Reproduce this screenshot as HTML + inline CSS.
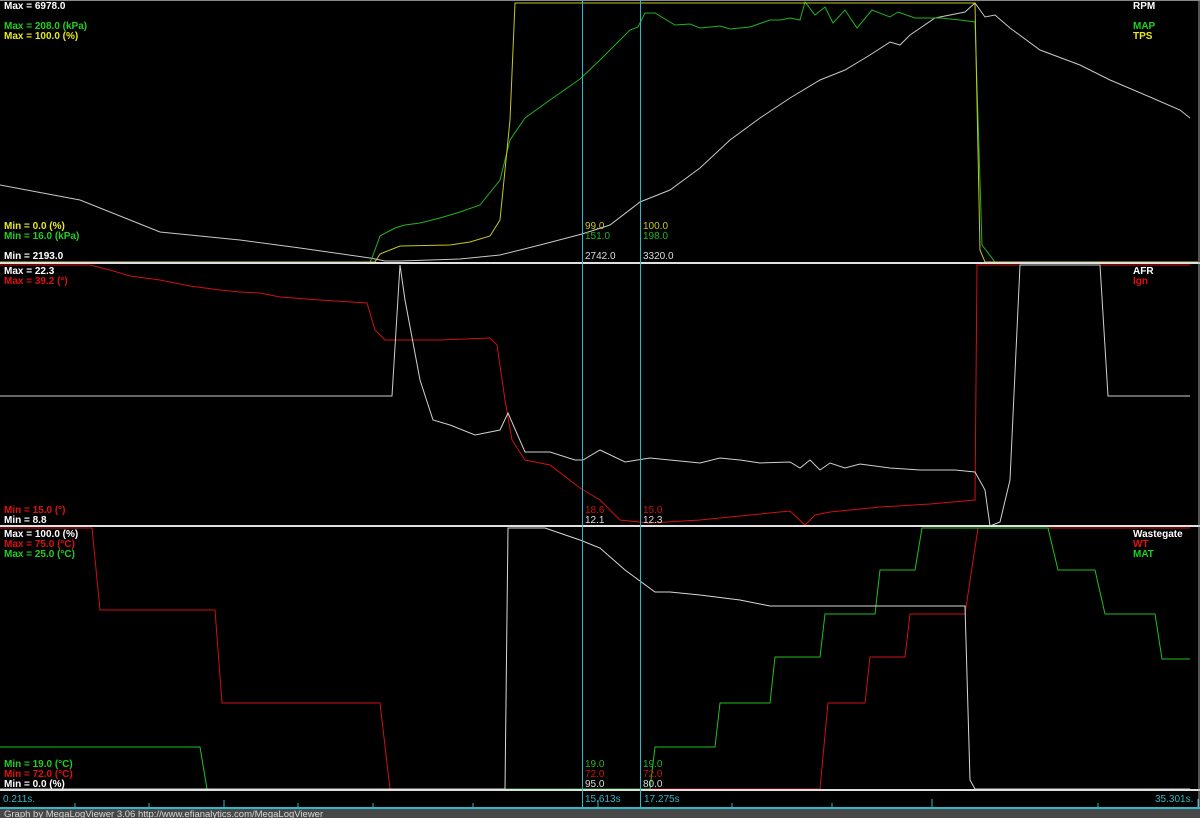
<!DOCTYPE html>
<html><head><meta charset="utf-8"><style>
html,body{margin:0;padding:0;background:#000;width:1200px;height:818px;overflow:hidden}
svg{display:block}
text{font-family:"Liberation Sans",sans-serif;font-size:10px}
.b{font-weight:bold}
</style></head><body>
<svg width="1200" height="818" viewBox="0 0 1200 818">
<rect width="1200" height="818" fill="#000"/>
<g fill="none" stroke-width="1">
<!-- panel 1 -->
<polyline stroke="#c8c8c8" points="0,185 80,200 130,220 160,232 240,240 300,248 370,258 385,261 400,261 460,259 500,255 540,245 582,234 610,225 640,202 670,190 700,168 730,140 760,118 790,98 820,80 845,70 870,55 890,42 900,45 910,35 935,18 965,12 975,3 985,17 995,15 1010,28 1040,50 1080,65 1110,80 1150,97 1180,110 1190,118"/>
<polyline stroke="#1fb51f" points="0,262 370,262 372,258 380,236 395,228 405,225 420,223 440,218 460,212 480,205 500,180 510,140 525,118 550,100 560,93 580,79 600,60 620,40 630,30 638,27 645,13 655,13 675,25 690,24 700,28 720,26 730,29 750,27 770,20 780,20 790,18 800,20 805,2 815,15 825,7 833,23 845,10 857,28 872,10 890,17 898,12 915,18 940,18 960,20 975,22 982,245 995,262"/>
<polyline stroke="#c8c820" points="0,262 375,262 380,254 400,246 450,245 470,242 490,236 500,220 510,120 515,3 975,3 980,250 985,262 1198,262"/>
<!-- panel 2 -->
<polyline stroke="#d01010" points="0,265 90,265 110,270 130,276 160,280 190,286 220,290 240,292 260,293 280,297 320,300 367,303 375,330 385,340 400,340 440,340 490,338 497,345 505,400 512,440 525,460 550,465 580,488 600,500 620,520 650,523 700,520 750,515 790,511 805,525 815,515 830,512 880,507 930,504 975,500 977,265 1190,265"/>
<polyline stroke="#d0d0d0" points="0,396 392,396 400,265 405,300 420,380 433,420 450,425 475,435 500,430 508,413 525,452 550,452 575,460 583,460 600,450 625,462 650,458 670,460 700,463 720,458 740,460 760,463 790,462 800,468 810,460 820,470 830,463 845,468 860,464 890,468 920,470 955,470 975,472 985,490 990,526 1000,522 1010,480 1020,265 1100,265 1108,396 1190,396"/>
<!-- panel 3 -->
<polyline stroke="#d01010" points="0,528 92,528 100,610 215,610 222,703 380,703 390,789 820,789 828,703 865,703 870,657 905,657 910,614 965,614 978,528 1190,528"/>
<polyline stroke="#1fc01f" points="0,747 200,747 207,789 650,789 655,747 715,747 720,703 770,703 775,657 820,657 825,614 875,614 880,570 915,570 922,528 1048,528 1058,570 1095,570 1105,614 1155,614 1162,659 1190,659"/>
<polyline stroke="#d8d8d8" points="0,789 505,789 508,528 545,528 580,540 600,548 625,570 655,592 670,592 700,595 740,600 770,606 965,606 970,780 975,789 1190,789"/>
</g>
<!-- separators -->
<g stroke="#e0e0e0" stroke-width="2">
<line x1="0" y1="263" x2="1200" y2="263"/>
<line x1="0" y1="526" x2="1200" y2="526"/>
<line x1="0" y1="790" x2="1200" y2="790"/>
</g>
<line x1="1199" y1="0" x2="1199" y2="808" stroke="#aaa"/>
<line x1="0" y1="0.5" x2="1200" y2="0.5" stroke="#888"/>
<!-- cursors -->
<g stroke="#30b8c8" stroke-width="1">
<line x1="582.5" y1="0" x2="582.5" y2="808"/>
<line x1="640.5" y1="0" x2="640.5" y2="808"/>
<line x1="0" y1="807.5" x2="1200" y2="807.5"/>
<line x1="75" y1="803" x2="75" y2="808"/><line x1="149" y1="803" x2="149" y2="808"/>
<line x1="224" y1="800" x2="224" y2="808"/><line x1="298" y1="803" x2="298" y2="808"/>
<line x1="373" y1="803" x2="373" y2="808"/><line x1="473" y1="803" x2="473" y2="808"/>
<line x1="598" y1="800" x2="598" y2="808"/><line x1="732" y1="803" x2="732" y2="808"/>
<line x1="832" y1="803" x2="832" y2="808"/><line x1="932" y1="799" x2="932" y2="808"/>
<line x1="1098" y1="803" x2="1098" y2="808"/><line x1="1198" y1="799" x2="1198" y2="808"/>
</g>
<rect x="0" y="808" width="1200" height="10" fill="#484848"/>
<line x1="0" y1="808.5" x2="1200" y2="808.5" stroke="#30b8c8"/>
<text x="4" y="817" fill="#d8d8d8" style="font-size:9.5px">Graph by MegaLogViewer 3.06 http://www.efianalytics.com/MegaLogViewer</text>
<g fill="#30b8c8">
<text x="3" y="802">0.211s.</text>
<text x="585" y="802">15.613s</text>
<text x="644" y="802">17.275s</text>
<text x="1155" y="802">35.301s.</text>
</g>
<!-- labels panel 1 -->
<g class="b">
<text x="4" y="9" fill="#fff" class="b">Max = 6978.0</text>
<text x="4" y="29" fill="#1fd01f" class="b">Max = 208.0 (kPa)</text>
<text x="4" y="39" fill="#e8e820" class="b">Max = 100.0 (%)</text>
<text x="4" y="229" fill="#e8e820" class="b">Min = 0.0 (%)</text>
<text x="4" y="239" fill="#1fd01f" class="b">Min = 16.0 (kPa)</text>
<text x="4" y="259" fill="#fff" class="b">Min = 2193.0</text>
<text x="1133" y="9" fill="#fff" class="b">RPM</text>
<text x="1133" y="29" fill="#1fd01f" class="b">MAP</text>
<text x="1133" y="39" fill="#e8e820" class="b">TPS</text>
<text x="4" y="274" fill="#fff" class="b">Max = 22.3</text>
<text x="4" y="284" fill="#e01010" class="b">Max = 39.2 (°)</text>
<text x="4" y="513" fill="#e01010" class="b">Min = 15.0 (°)</text>
<text x="4" y="523" fill="#fff" class="b">Min = 8.8</text>
<text x="1133" y="274" fill="#fff" class="b">AFR</text>
<text x="1133" y="284" fill="#e01010" class="b">Ign</text>
<text x="4" y="537" fill="#fff" class="b">Max = 100.0 (%)</text>
<text x="4" y="547" fill="#e01010" class="b">Max = 75.0 (°C)</text>
<text x="4" y="557" fill="#1fd01f" class="b">Max = 25.0 (°C)</text>
<text x="4" y="767" fill="#1fd01f" class="b">Min = 19.0 (°C)</text>
<text x="4" y="777" fill="#e01010" class="b">Min = 72.0 (°C)</text>
<text x="4" y="787" fill="#fff" class="b">Min = 0.0 (%)</text>
<text x="1133" y="537" fill="#fff" class="b">Wastegate</text>
<text x="1133" y="547" fill="#e01010" class="b">WT</text>
<text x="1133" y="557" fill="#1fd01f" class="b">MAT</text>
</g>
<!-- cursor values -->
<g>
<text x="585" y="229" fill="#c8c820">99.0</text><text x="643" y="229" fill="#c8c820">100.0</text>
<text x="585" y="239" fill="#1fb51f">151.0</text><text x="643" y="239" fill="#1fb51f">198.0</text>
<text x="585" y="259" fill="#ddd">2742.0</text><text x="643" y="259" fill="#ddd">3320.0</text>
<text x="585" y="513" fill="#d01010">18.6</text><text x="643" y="513" fill="#d01010">15.0</text>
<text x="585" y="523" fill="#ddd">12.1</text><text x="643" y="523" fill="#ddd">12.3</text>
<text x="585" y="767" fill="#1fb51f">19.0</text><text x="643" y="767" fill="#1fb51f">19.0</text>
<text x="585" y="777" fill="#d01010">72.0</text><text x="643" y="777" fill="#d01010">72.0</text>
<text x="585" y="787" fill="#ddd">95.0</text><text x="643" y="787" fill="#ddd">80.0</text>
</g>
</svg>
</body></html>
